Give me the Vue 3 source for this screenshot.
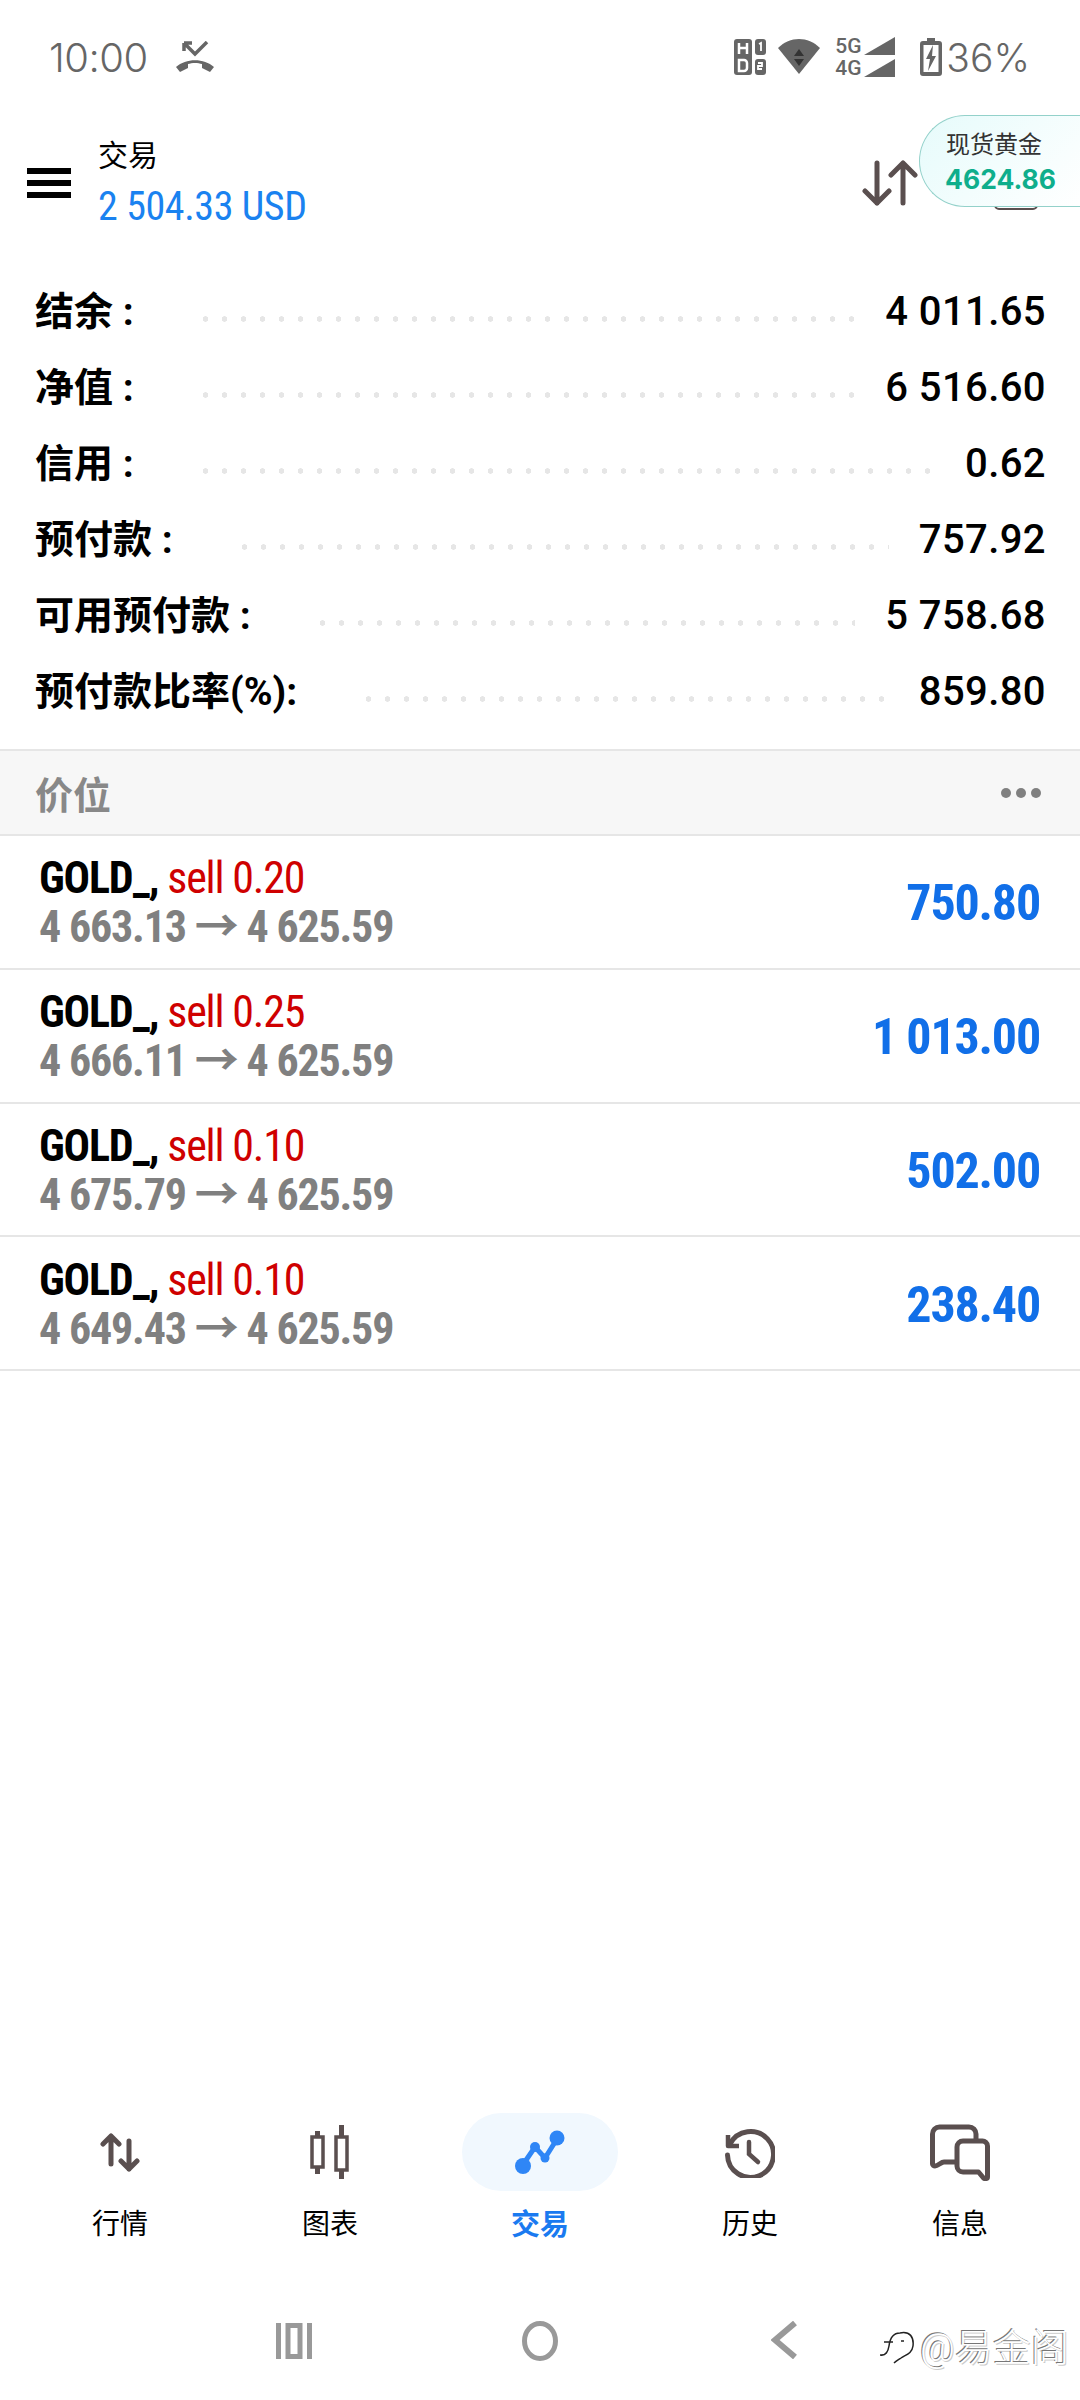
<template>
  <div class="screen">
    <div class="status-bar">
      <div class="status-left">
        <span class="clock">10:00</span>
        <svg class="call-icon" width="40" height="32" viewBox="0 0 40 32">
          <path d="M1 26c10-9 28-9 38 0l-4 5-8-4v-4c-4-1.500-10-1.500-14 0v4l-8 4z" fill="#666" />
          <path d="M9 2l11 11L32 1M9 2h8M9 2v8" fill="none" stroke="#666" stroke-width="3.500" />
        </svg>
      </div>
      <div class="status-right">
        <svg width="32" height="36" viewBox="0 0 32 36">
          <rect x="0" y="0" width="18" height="36" rx="3" fill="#666" />
          <rect x="21" y="0" width="11" height="16" rx="3" fill="#666" />
          <rect x="21" y="20" width="11" height="16" rx="3" fill="#666" />
          <path d="M5 4v11M13 4v11M5 9h8" stroke="#fff" stroke-width="2.500" fill="none" />
          <path d="M5 21h5a3 3 0 0 1 3 3v5a3 3 0 0 1-3 3H5z" stroke="#fff" stroke-width="2.500" fill="none" />
          <path d="M25 5l2-1v8M24 24h4v3h-4v3h4" stroke="#fff" stroke-width="1.800" fill="none" />
        </svg>
        <svg class="wifi" width="42" height="36" viewBox="0 0 42 36">
          <path d="M0 9c12-12 30-12 42 0L21 35z" fill="#666" />
          <path d="M21 10l5 7H16zM16 20h10l-5 7z" fill="#333" />
        </svg>
        <div class="net">
          <div class="net-line"><span>5G</span><svg width="31" height="18" viewBox="0 0 31 18"><path d="M0 18L31 0v18z" fill="#666" /></svg></div>
          <div class="net-line"><span>4G</span><svg width="31" height="18" viewBox="0 0 31 18"><path d="M0 18L31 0v18z" fill="#666" /></svg></div>
        </div>
        <svg class="battery" width="22" height="38" viewBox="0 0 22 38">
          <path d="M7 0h8v3h4a3 3 0 0 1 3 3v29a3 3 0 0 1-3 3H3a3 3 0 0 1-3-3V6a3 3 0 0 1 3-3h4z" fill="#666" />
          <rect x="3.500" y="7" width="15" height="27" fill="#fff" />
          <path d="M13 7L6 21h4l-2 12 8-15h-4z" fill="#666" />
        </svg>
        <span class="battery-text">36%</span>
      </div>
    </div>

    <header class="top-bar">
      <div class="hamburger"><i></i><i></i><i></i></div>
      <div class="title-block">
        <div class="title">交易</div>
        <div class="balance cond">2 504.33 USD</div>
      </div>
      <svg class="sort-icon" width="56" height="46" viewBox="0 0 56 46">
        <path d="M15 3v40M3 31l12 12 12-12M41 43V3M29 15L41 3l12 12" fill="none" stroke="#5a4f4f" stroke-width="5" stroke-linecap="round" stroke-linejoin="round" />
      </svg>
      <div class="hidden-icon"></div>
      <div class="gold-badge">
        <div class="gold-name">现货黄金</div>
        <div class="gold-price">4624.86</div>
      </div>
    </header>

    <section class="summary">
      <div v-for="row in summary" :key="row.label" class="summary-row">
        <span class="summary-label">{{ row.label }}</span>
        <span class="dots"></span>
        <span class="summary-value">{{ row.value }}</span>
      </div>
    </section>

    <div class="section-head">
      <span>价位</span>
      <div class="more"><i></i><i></i><i></i></div>
    </div>

    <div v-for="(p, i) in positions" :key="i" class="position">
      <div>
        <div class="pos-line1 cond"><b>GOLD_,</b> <span class="sell">sell {{ p.lots }}</span></div>
        <div class="pos-line2 cond">{{ p.open }} → 4 625.59</div>
      </div>
      <div class="profit cond">{{ p.profit }}</div>
    </div>

    <nav class="tabs">
      <div v-for="tab in tabs" :key="tab.name" class="tab" :class="{ active: tab.active }">
        <div class="tab-icon">
          <svg v-if="tab.name === '行情'" width="40" height="40" viewBox="0 0 40 40">
            <path d="M11 32V4M3 12l8-8 8 8M29 9v28M21 29l8 8 8-8" fill="none" stroke="#5a4f4f" stroke-width="5" stroke-linecap="round" stroke-linejoin="round" />
          </svg>
          <svg v-else-if="tab.name === '图表'" width="40" height="54" viewBox="0 0 40 54">
            <path d="M7.500 6v43M31.500 0v54" stroke="#5a4f4f" stroke-width="5" />
            <rect x="2" y="12" width="11" height="30" fill="#fff" stroke="#5a4f4f" stroke-width="3.500" />
            <rect x="26" y="12" width="11" height="33" fill="#fff" stroke="#5a4f4f" stroke-width="3.500" />
          </svg>
          <svg v-else-if="tab.name === '交易'" width="50" height="45" viewBox="0 0 50 45">
            <path d="M7 36L20 17l10 11L42 9" fill="none" stroke="#2f86f6" stroke-width="5" />
            <circle cx="8" cy="36" r="8" fill="#2f86f6" />
            <circle cx="20" cy="17" r="5" fill="#2f86f6" />
            <circle cx="30" cy="28" r="4.500" fill="#2f86f6" />
            <circle cx="42" cy="8" r="7.500" fill="#2f86f6" />
          </svg>
          <svg v-else-if="tab.name === '历史'" width="50" height="51" viewBox="0 0 50 51">
            <path d="M5 17A23 23 0 1 1 2.500 28" fill="none" stroke="#5a4f4f" stroke-width="5" stroke-linecap="round" />
            <path d="M3 8v11h11" fill="none" stroke="#5a4f4f" stroke-width="4.500" stroke-linejoin="round" />
            <path d="M24 15v12l9 8" fill="none" stroke="#5a4f4f" stroke-width="4.500" stroke-linecap="round" />
          </svg>
          <svg v-else width="60" height="57" viewBox="0 0 60 57">
            <path d="M26 38H14c-3 0-6 4-9 4-1 0-2.500-1-2.500-2V10a7 7 0 0 1 7-7H39a7 7 0 0 1 7 7v7" fill="none" stroke="#5a4f4f" stroke-width="5" stroke-linejoin="round" />
            <path d="M33 17h19a5 5 0 0 1 5.500 5v31c0 2-3 2-4 1l-5-6H33a6 6 0 0 1-6-6V23a6 6 0 0 1 6-6z" fill="none" stroke="#5a4f4f" stroke-width="5" stroke-linejoin="round" />
          </svg>
        </div>
        <div class="tab-name">{{ tab.name }}</div>
      </div>
    </nav>

    <div class="sys-nav">
      <svg width="36" height="36" viewBox="0 0 36 36">
        <path d="M2.500 0v36M33.500 0v36" stroke="#999" stroke-width="5" />
        <rect x="12" y="2.500" width="12" height="31" fill="none" stroke="#999" stroke-width="5" />
      </svg>
      <svg width="36" height="40" viewBox="0 0 36 40">
        <ellipse cx="18" cy="20" rx="15.500" ry="17.500" fill="none" stroke="#999" stroke-width="5" />
      </svg>
      <svg width="26" height="38" viewBox="0 0 26 38">
        <path d="M24 2L4 19l20 17" fill="none" stroke="#999" stroke-width="6" />
      </svg>
    </div>

    <div class="watermark">
      <svg width="34" height="38" viewBox="0 0 34 38">
        <path d="M0 29c6 1 8-3 9-9 1-8 4-13 11-13M4 16h9M20 7c10-2 14 4 13 13-1 8-8 9-12 12-3 2-5 3-7 5" fill="none" stroke="#222" stroke-width="1.500" />
        <path d="M21 15h3" stroke="#222" stroke-width="1.500" />
      </svg>
      <span>@易金阁</span>
    </div>
  </div>
</template>

<script setup>
const summary = [
  { label: '结余 :', value: '4 011.65' },
  { label: '净值 :', value: '6 516.60' },
  { label: '信用 :', value: '0.62' },
  { label: '预付款 :', value: '757.92' },
  { label: '可用预付款 :', value: '5 758.68' },
  { label: '预付款比率(%):', value: '859.80' }
]

const positions = [
  { lots: '0.20', open: '4 663.13', profit: '750.80' },
  { lots: '0.25', open: '4 666.11', profit: '1 013.00' },
  { lots: '0.10', open: '4 675.79', profit: '502.00' },
  { lots: '0.10', open: '4 649.43', profit: '238.40' }
]

const tabs = [
  { name: '行情' },
  { name: '图表' },
  { name: '交易', active: true },
  { name: '历史' },
  { name: '信息' }
]
</script>

<style>
html,
body {
  margin: 0;
  background: #fff;
}
</style>

<style scoped>
.screen {
  position: relative;
  width: 1080px;
  height: 2400px;
  overflow: hidden;
  background: #fff;
  font-family: Roboto, "Noto Sans CJK SC", sans-serif;
  color: #000;
}

.cond {
  font-family: "Roboto Condensed", "Liberation Sans Narrow", Roboto, "Noto Sans CJK SC", sans-serif;
  font-stretch: condensed;
}

.status-bar {
  display: flex;
  justify-content: space-between;
  align-items: center;
  height: 114px;
  padding: 0 50px 0 49px;
  color: #666;
}

.status-left,
.status-right {
  display: flex;
  align-items: center;
}

.clock {
  font-family: Inter, sans-serif;
  font-size: 40px;
  font-weight: 300;
  letter-spacing: -0.5px;
}

.call-icon {
  margin-left: 27px;
}

.wifi {
  margin-left: 12px;
}

.net {
  margin-left: 15px;
  display: flex;
  flex-direction: column;
  gap: 4px;
}

.net-line {
  display: flex;
  align-items: flex-end;
  justify-content: space-between;
  width: 60px;
  height: 18px;
  font-size: 21px;
  font-weight: 500;
  line-height: 18px;
}

.battery {
  margin-left: 25px;
}

.battery-text {
  margin-left: 4px;
  font-family: Inter, sans-serif;
  font-size: 39px;
  font-weight: 300;
}

.top-bar {
  position: relative;
  display: flex;
  align-items: center;
  height: 100px;
  padding-left: 27px;
}

.hamburger {
  display: flex;
  flex-direction: column;
  gap: 6px;
  width: 44px;
  margin-top: 38px;
}

.hamburger i {
  display: block;
  height: 6px;
  background: #000;
}

.title-block {
  margin: 38px 0 0 27px;
}

.title {
  margin-bottom: 8px;
  font-size: 30px;
  line-height: 40px;
}

.balance {
  font-size: 40px;
  letter-spacing: -0.4px;
  line-height: 46px;
  color: #1a82f0;
}

.sort-icon {
  position: absolute;
  left: 862px;
  top: 46px;
}

.hidden-icon {
  position: absolute;
  left: 994px;
  top: 60px;
  width: 44px;
  height: 36px;
  border: 2px solid #5a4f4f;
  border-radius: 5px;
  box-sizing: border-box;
}

.gold-badge {
  position: absolute;
  left: 919px;
  top: 1px;
  width: 161px;
  height: 92px;
  box-sizing: border-box;
  padding: 12px 0 0 25px;
  border: 1px solid #93d1ca;
  border-right: none;
  border-radius: 46px 0 0 46px;
  background: linear-gradient(135deg, #e6fbfb, #fff);
}

.gold-name {
  padding-left: 1px;
  font-size: 24px;
  line-height: 34px;
  color: #333;
}

.gold-price {
  font-family: Inter, sans-serif;
  font-size: 26.500px;
  font-weight: 700;
  line-height: 35px;
  color: #0fae8c;
}

.summary {
  padding: 60px 34px 0 35px;
  height: 535px;
  box-sizing: border-box;
}

.summary-row {
  display: flex;
  align-items: center;
  height: 76px;
}

.summary-label {
  font-size: 39px;
  font-weight: 700;
  line-height: 50px;
  white-space: nowrap;
}

.dots {
  flex: 1;
  height: 6px;
  margin: 14px 30px 0 62px;
  background: radial-gradient(circle, #e6e6e6 2.500px, transparent 3px) 0 0 / 19px 6px repeat-x;
}

.summary-value {
  font-size: 40px;
  font-weight: 500;
  letter-spacing: 0.4px;
  line-height: 50px;
}

.section-head {
  display: flex;
  justify-content: space-between;
  align-items: center;
  height: 87px;
  padding: 0 39px 0 35px;
  box-sizing: border-box;
  border-top: 2px solid #e6e6e6;
  border-bottom: 2px solid #e6e6e6;
  background: #f7f7f7;
  font-size: 38px;
  font-weight: 700;
  color: #888;
}

.more {
  display: flex;
  gap: 5px;
}

.more i {
  width: 10px;
  height: 10px;
  border-radius: 50%;
  background: #808080;
}

.position {
  display: flex;
  justify-content: space-between;
  align-items: center;
  height: 133.750px;
  padding: 3px 40px 0 39px;
  box-sizing: border-box;
  border-bottom: 2px solid #e6e6e6;
}

.pos-line1,
.pos-line2 {
  font-size: 44px;
  letter-spacing: -1.200px;
  line-height: 49px;
  white-space: nowrap;
}

.sell {
  color: #cf0000;
}

.pos-line2 {
  font-weight: 700;
  color: #808080;
}

.profit {
  font-size: 50px;
  font-weight: 700;
  letter-spacing: -1.200px;
  color: #116fe8;
}

.tabs {
  position: absolute;
  left: 15px;
  right: 15px;
  top: 2113px;
  display: flex;
}

.tab {
  flex: 1;
  display: flex;
  flex-direction: column;
  align-items: center;
}

.tab-icon {
  display: flex;
  justify-content: center;
  align-items: center;
  width: 156px;
  height: 78px;
  border-radius: 39px;
}

.active .tab-icon {
  background: #f1f8fe;
}

.tab-name {
  margin-top: 14px;
  font-size: 28px;
  line-height: 40px;
}

.active .tab-name {
  font-size: 29px;
  font-weight: 700;
  color: #1a7af0;
}

.sys-nav {
  position: absolute;
  left: 0;
  right: 0;
  top: 2321px;
  height: 40px;
}

.sys-nav svg {
  position: absolute;
  top: 0;
}

.sys-nav svg:nth-child(1) {
  left: 276px;
  top: 2px;
}

.sys-nav svg:nth-child(2) {
  left: 522px;
}

.sys-nav svg:nth-child(3) {
  left: 771px;
}

.watermark {
  position: absolute;
  left: 880px;
  top: 2317px;
  display: flex;
  align-items: center;
  gap: 6px;
}

.watermark span {
  font-size: 38px;
  font-weight: 300;
  color: #fff;
  text-shadow: -1px -1px 0 #777, 1px 1px 0 #ccc;
  white-space: nowrap;
}
</style>
